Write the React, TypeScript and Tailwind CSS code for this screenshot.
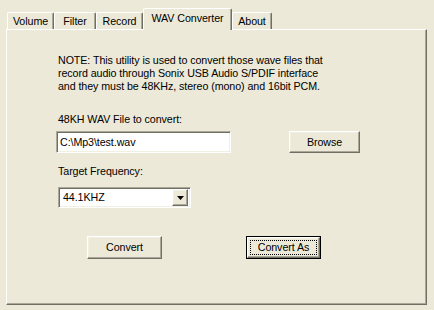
import { useState } from 'react';

const tabs = [
  { label: 'Volume', w: 'w-[47px]' },
  { label: 'Filter', w: 'w-[42px]' },
  { label: 'Record', w: 'w-[47px]' },
  { label: 'WAV Converter', w: 'w-[89px]' },
  { label: 'About', w: 'w-[40px]' },
];

// classic raised 3D edge on the XP beige face
const raised =
  'border border-t-white border-l-white border-r-[#716F64] border-b-[#716F64] shadow-[inset_-1px_-1px_0_#ACA899,inset_1px_1px_0_#F1EFE2]';
const sunken =
  'border border-t-[#ACA899] border-l-[#ACA899] border-r-white border-b-white shadow-[inset_1px_1px_0_#716F64,inset_-1px_-1px_0_#F1EFE2]';

function Button({ label, isDefault }: { label: string; isDefault?: boolean }) {
  if (isDefault) {
    return (
      <div className="w-[75px] h-[23px] border border-black bg-[#ECE9D8]">
        <div className={`w-full h-full ${raised} p-[2px]`}>
          <div className="w-full h-full border border-dotted border-black flex items-center justify-center">{label}</div>
        </div>
      </div>
    );
  }
  return (
    <div className={`w-[75px] h-[23px] bg-[#ECE9D8] ${raised} flex items-center justify-center`}>{label}</div>
  );
}

export default function App() {
  const [active, setActive] = useState(3);
  const [path, setPath] = useState('C:\\Mp3\\test.wav');

  return (
    <div
      className="w-[434px] h-[310px] bg-[#ECE9D8] text-black text-[10.7px] leading-[13px] tracking-[-0.08px] pt-[8px] pl-[6px] overflow-hidden select-none"
      style={{ fontFamily: '"Liberation Sans", Arial, sans-serif' }}
    >
      {/* tab strip */}
      <div className="flex items-end h-[21px] pl-[1px]">
        {tabs.map((t, i) => {
          const sel = i === active;
          return (
            <div
              key={t.label}
              onClick={() => setActive(i)}
              className={`${t.w} relative flex justify-center border-t border-l border-r border-t-white border-l-white border-r-[#716F64] rounded-t-[2px] bg-[#ECE9D8] shadow-[inset_-1px_0_0_#ACA899] ${
                sel ? 'h-[22px] -mb-[1px] z-10 pt-[3px]' : 'h-[17px] pt-[2px]'
              }`}
            >
              {t.label}
            </div>
          );
        })}
      </div>

      {/* panel */}
      <div className="w-[421px] h-[276px] border border-t-white border-l-white border-r-[#716F64] border-b-[#716F64] shadow-[inset_-1px_-1px_0_#ACA899] pl-[51px] pt-[24px] flex flex-col">
        <p>
          NOTE: This utility is used to convert those wave files that
          <br />
          record audio through Sonix USB Audio S/PDIF interface
          <br />
          and they must be 48KHz, stereo (mono) and 16bit PCM.
        </p>

        <div className="mt-[20px]">48KH WAV File to convert:</div>
        <div className="flex items-center mt-[5px] -ml-[2px]">
          <div className={`w-[175px] h-[22px] bg-white ${sunken} flex items-center pl-[3px]`}>
            <input
              value={path}
              onChange={(e) => setPath(e.target.value)}
              className="w-full bg-transparent outline-none border-none p-0 text-[10.7px] tracking-[-0.08px]"
            />
          </div>
          <div className="ml-[58px]">
            <div className={`w-[71px] h-[22px] bg-[#ECE9D8] ${raised} flex items-center justify-center`}>Browse</div>
          </div>
        </div>

        <div className="mt-[12px]">Target Frequency:</div>
        <div className={`mt-[9px] w-[133px] h-[21px] bg-white ${sunken} flex items-center p-[2px]`}>
          <span className="flex-1 pl-[2px]">44.1KHZ</span>
          <div className={`w-[16px] h-[17px] bg-[#ECE9D8] ${raised} flex items-center justify-center`}>
            <svg width="7" height="4" viewBox="0 0 7 4">
              <path d="M0 0h7L3.5 4z" fill="#000" />
            </svg>
          </div>
        </div>

        <div className="flex mt-[28px] ml-[29px] gap-[84px]">
          <Button label="Convert" />
          <Button label="Convert As" isDefault />
        </div>
      </div>
    </div>
  );
}
